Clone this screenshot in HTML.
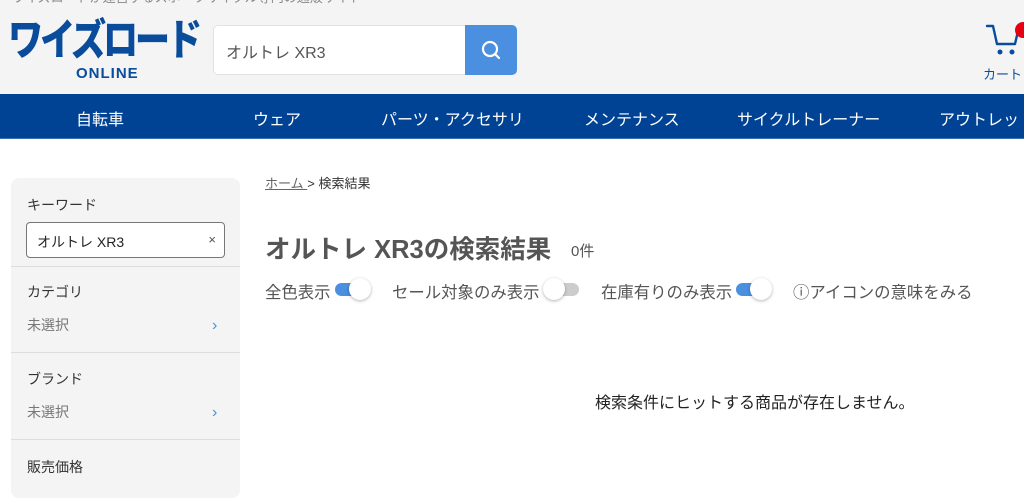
<!DOCTYPE html>
<html><head><meta charset="utf-8"><style>
*{margin:0;padding:0;box-sizing:border-box}
body{width:1024px;height:487px;overflow:hidden;background:#fff;font-family:"Liberation Sans","Noto Sans CJK JP",sans-serif;color:#333;position:relative}
.hdr{position:absolute;left:0;top:0;width:1024px;height:94px;background:#f4f4f4}
.toptxt{position:absolute;left:12px;top:-13px;font-size:13px;color:#888;white-space:nowrap}
.logo{position:absolute;left:8px;top:12px;font-size:43px;font-weight:900;color:#0a4c9c;letter-spacing:-4px;white-space:nowrap;font-family:"Noto Sans CJK JP",sans-serif;line-height:50px;transform-origin:left top;transform:scale(0.82,1)}
.online{position:absolute;left:76px;top:65px;font-size:15px;font-weight:700;color:#0a4c9c;letter-spacing:1px}
.search{position:absolute;left:213px;top:25px;width:253px;height:50px;background:#fff;border:1px solid #e2e2e2;border-radius:5px 0 0 5px;font-size:16px;color:#555;padding:13px 0 0 12px}
.sbtn{position:absolute;left:465px;top:25px;width:52px;height:50px;background:#4a8fe0;border-radius:0 5px 5px 0}
.cart{position:absolute;left:983px;top:64px;font-size:13px;color:#0a4c9c}
.nav{position:absolute;left:0;top:94px;width:1024px;height:45px;background:#004394;border-bottom:1px solid #3a6fb0}
.nav span{position:absolute;top:12px;color:#fff;font-size:16px;white-space:nowrap}
.side{position:absolute;left:11px;top:178px;width:229px;height:320px;background:#f4f4f4;border-radius:8px}
.side .lbl{position:absolute;left:16px;font-size:14px;color:#333}
.side .sub{position:absolute;left:16px;font-size:14px;color:#777}
.side .hr{position:absolute;left:0;width:229px;height:1px;background:#ddd}
.side .arr{position:absolute;left:201px;color:#4a8fe0;font-size:16px}
.kw{position:absolute;left:15px;top:44px;width:199px;height:36px;background:#fff;border:1px solid #777;border-radius:4px;font-size:14px;padding:9px 0 0 10px;color:#222}
.crumb{position:absolute;left:265px;top:173px;font-size:13px;color:#333}
.crumb u{color:#666}
h1{position:absolute;left:265px;top:229px;font-size:25.5px;font-weight:700;color:#555;white-space:nowrap}
.cnt{position:absolute;left:571px;top:240px;font-size:15px;color:#555}
.opt{position:absolute;top:279px;font-size:16.4px;color:#555;white-space:nowrap}
.tg{position:absolute;top:278px;width:36px;height:22px}
.tg .tr{position:absolute;left:0;top:5px;width:26px;height:13px;border-radius:7px;background:#4a8fe0}
.tg .kn{position:absolute;left:14px;top:0;width:22px;height:22px;border-radius:50%;background:#fff;box-shadow:0 1px 3px rgba(0,0,0,.3)}
.tg.off .tr{background:#ccc;left:10px}
.tg.off .kn{left:0}
.empty{position:absolute;left:595px;top:389px;font-size:16px;color:#222}
</style></head><body>
<div class="hdr">
<div class="toptxt">ワイズロードが運営するスポーツサイクル専門の通販サイト</div>
<div class="logo">ワイズロード</div>
<div class="online">ONLINE</div>
<div class="search">オルトレ XR3</div>
<div class="sbtn"><svg width="52" height="50"><circle cx="25" cy="24" r="7" fill="none" stroke="#fff" stroke-width="2.2"/><line x1="30" y1="29" x2="34" y2="33" stroke="#fff" stroke-width="2.2" stroke-linecap="round"/></svg></div>
<svg style="position:absolute;left:984px;top:22px" width="40" height="36"><path d="M3 4h6l4 18h18l3-13" fill="none" stroke="#0a4c9c" stroke-width="2.4" stroke-linejoin="round" stroke-linecap="round"/><circle cx="16" cy="30" r="2.5" fill="#0a4c9c"/><circle cx="28" cy="30" r="2.5" fill="#0a4c9c"/><circle cx="39" cy="8" r="8" fill="#e60012"/></svg>
<div class="cart">カート</div>
</div>
<div class="nav">
<span style="left:76px">自転車</span><span style="left:253px">ウェア</span><span style="left:381px">パーツ・アクセサリ</span><span style="left:584px">メンテナンス</span><span style="left:737px">サイクルトレーナー</span><span style="left:939px">アウトレット</span>
</div>
<div class="side">
<div class="lbl" style="top:17px">キーワード</div>
<div class="kw">オルトレ XR3<span style="position:absolute;right:8px;top:9px;font-size:13px;color:#555">×</span></div>
<div class="hr" style="top:88px"></div>
<div class="lbl" style="top:104px">カテゴリ</div>
<div class="sub" style="top:137px">未選択</div><div class="arr" style="top:139px">›</div>
<div class="hr" style="top:174px"></div>
<div class="lbl" style="top:191px">ブランド</div>
<div class="sub" style="top:224px">未選択</div><div class="arr" style="top:226px">›</div>
<div class="hr" style="top:261px"></div>
<div class="lbl" style="top:279px">販売価格</div>
</div>
<div class="crumb"><u>ホーム </u>&gt; 検索結果</div>
<h1>オルトレ XR3の検索結果</h1>
<div class="cnt">0件</div>
<div class="opt" style="left:265px">全色表示</div><div class="tg" style="left:335px"><div class="tr"></div><div class="kn"></div></div>
<div class="opt" style="left:392px">セール対象のみ表示</div><div class="tg off" style="left:543px"><div class="tr"></div><div class="kn"></div></div>
<div class="opt" style="left:601px">在庫有りのみ表示</div><div class="tg" style="left:736px"><div class="tr"></div><div class="kn"></div></div>
<div class="opt" style="left:793px">ⓘアイコンの意味をみる</div>
<div class="empty">検索条件にヒットする商品が存在しません。</div>
</body></html>
